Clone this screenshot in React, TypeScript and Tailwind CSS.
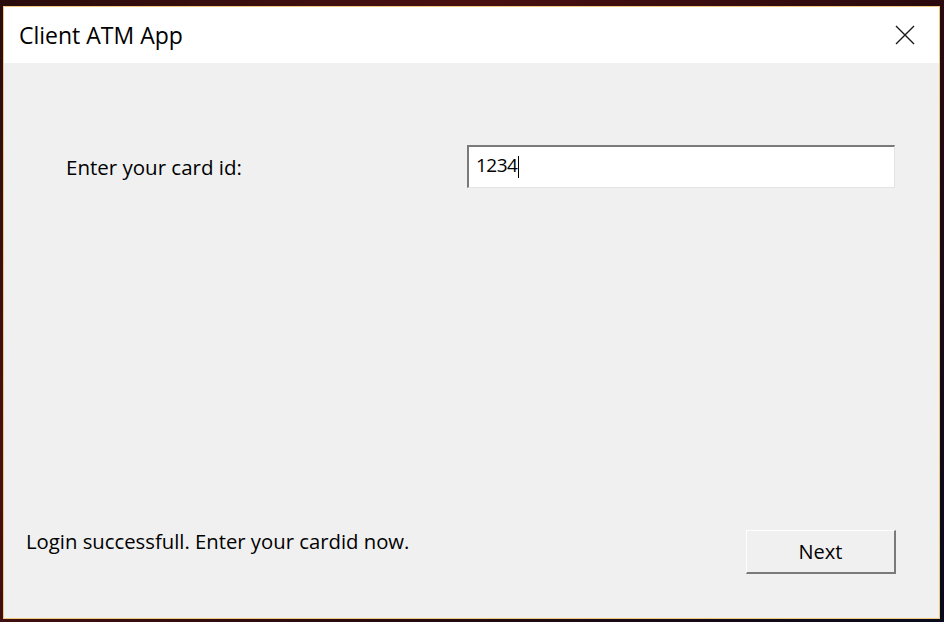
import React from "react";

const font = { fontFamily: '"Open Sans", "Noto Sans", sans-serif' };

const App: React.FC = () => {
  return (
    <div
      className="w-[944px] h-[622px] pl-[3px] pt-[6px] pr-[4px] pb-[3px] bg-[linear-gradient(135deg,#2a0c0c_0%,#4a1010_30%,#2a0a0e_60%,#070a1c_100%)]"
      style={font}
    >
      <div className="flex flex-col h-full border border-[#ecc97e] bg-white">
        {/* title bar */}
        <div className="h-[56px] flex items-center justify-between pl-[15px] pr-[24px] bg-white">
          <span className="text-[23px] text-black">Client ATM App</span>
          <svg width="20" height="20" viewBox="0 0 20 20">
            <path d="M1 1 L19 19 M19 1 L1 19" stroke="#1a1a1a" strokeWidth="1.4" />
          </svg>
        </div>

        {/* client area */}
        <div className="flex-1 flex flex-col bg-[#f0f0f0]">
          <div className="flex items-center mt-[82px] pl-[62px] pr-[44px]">
            <span className="text-[20.5px] text-black mt-[2px]">Enter your card id:</span>
            <div className="ml-auto w-[428px] h-[43px] bg-white border-t-2 border-l-2 border-b border-r border-t-[#7a7a7a] border-l-[#7a7a7a] border-b-[#e3e3e3] border-r-[#e3e3e3] flex items-center pl-[7px]">
              <span className="text-[19px] tracking-[-0.5px] text-black leading-none mt-[-4px]">1234</span>
              <span className="ml-[1px] w-px h-[22px] bg-black" />
            </div>
          </div>

          <div className="mt-auto flex items-start justify-between pl-[22px] pr-[43px] pb-[44px]">
            <span className="text-[20.3px] text-black mt-[-4px]">Login successfull. Enter your cardid now.</span>
            <button className="w-[150px] h-[44px] bg-[#f0f0f0] border-t border-l border-b-2 border-r-2 border-t-[#fdfdfd] border-l-[#fdfdfd] border-b-[#7a7a7a] border-r-[#7a7a7a] text-[20px] text-black">
              Next
            </button>
          </div>
        </div>
      </div>
    </div>
  );
};

export default App;
